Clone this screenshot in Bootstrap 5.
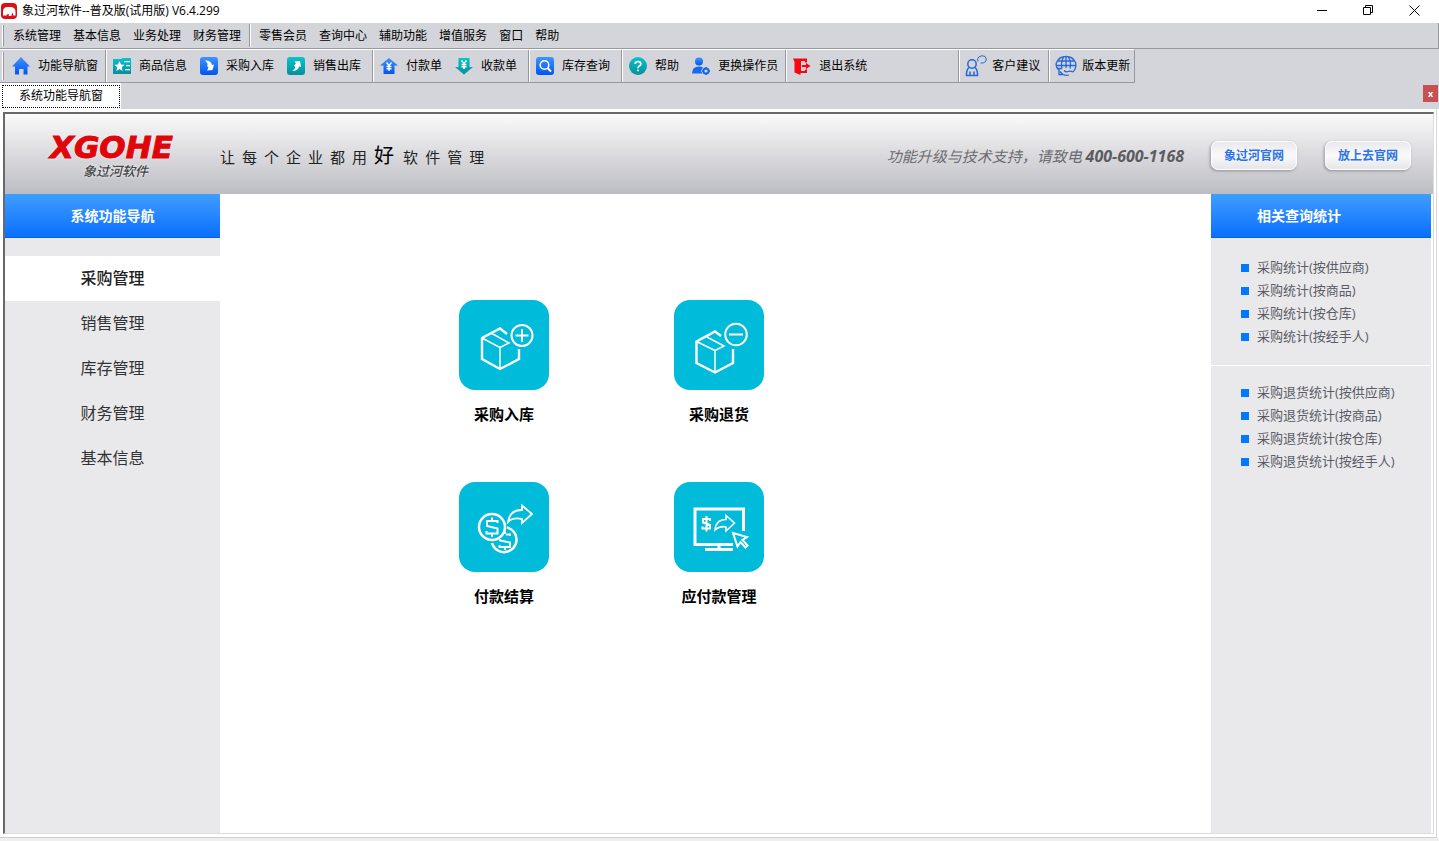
<!DOCTYPE html>
<html lang="zh-CN">
<head>
<meta charset="utf-8">
<meta name="viewport" content="width=device-width, initial-scale=1">
<title>象过河软件--普及版(试用版) V6.4.299</title>
<link href="https://cdn.jsdelivr.net/npm/bootstrap@5.3.0/dist/css/bootstrap.min.css" rel="stylesheet">
<style>
  :root { --chrome: #d4d5da; --accent: #0078ff; --tile: #00bbd9; }
  body { font-family: "Open Sans", "Noto Sans CJK SC", sans-serif; font-size: 12px; line-height: 18px; color: #000; background: #fff; }
  button { font-family: inherit; }
  a { text-decoration: none; }
  svg { display: block; flex: none; }

  .title-bar { height: 23px; }
  .title-bar .app-name { padding: 0 4px 2px; }
  .win-btn { width: 46px; height: 23px; padding: 0 0 3px; border: 0; border-radius: 0; display: flex; align-items: center; justify-content: center; }
  .win-btns { padding-right: 2px; }

  .menu-strip { height: 26px; background: var(--chrome); border-bottom: 1px solid #97989c; border-right: 1px solid #97989c; padding: 0 2px; }
  .grip { width: 2px; border-left: 1px solid #fff; border-right: 1px solid #97989c; margin: 2px 3px 2px 0; }
  .menu-strip .nav-link { padding: 4px 6px 3px; color: #000; font-size: 12px; line-height: 18px; }
  .bar-split { width: 2px; border-left: 1px solid #97989c; border-right: 1px solid #fff; }
  .menu-strip .bar-split { margin: 1px 0 1px 2px; }

  .tool-area { background: var(--chrome); }
  .tool-strip { height: 34px; width: max-content; border-top: 1px solid #fff; border-bottom: 1px solid #97989c; border-right: 1px solid #97989c; padding-left: 2px; }
  .tool-strip .grip { margin-right: 2px; }
  .tool-group { display: flex; padding: 0 4px 0 0; }
  .tool-group.wide-gap { padding-right: 84px; }
  .tool-btn { display: flex; align-items: center; gap: 8px; border: 0; border-radius: 0; background: none; padding: 0 7px 0 6px; font-size: 12px; line-height: 18px; color: #000; }
  .tool-btn.tool-lg { gap: 5px; padding: 0 4px 0 5px; }

  .tab-row { height: 26px; background: var(--chrome); }
  .doc-tab { background: #fff; padding: 2px 1px 1px 2px; border: 0; }
  .doc-tab > span { display: block; border: 1px dotted #000; padding: 1px 16px 2px; line-height: 18px; }
  .tab-close { width: 15px; height: 17px; margin: 2px 1px 0 0; padding: 0; border: 0; background: #c75050; color: #fff; font-size: 9px; line-height: 14px; font-weight: 700; }

  .frame-wrap { padding: 3px 2px 3px 3px; border-right: 1px solid #d9d9d9; border-bottom: 1px solid #d0d0d0; margin-right: 2px; }
  .frame { border-style: solid; border-width: 2px 1px 1px 2px; border-color: #696969 #dcdcdc #dcdcdc #696969; }
  .banner { height: 80px; background: linear-gradient(#fafafa, #d8d8dc 55%, #bcbdc3); padding: 2px 22px 0 45px; }
  .brand-box { width: 170px; }
  .brand-name { font: italic 700 31px/31px "DejaVu Sans", sans-serif; color: #e0050a; -webkit-text-stroke: 1px #e0050a; text-shadow: 0 0 3px #fff; }
  .brand-sub { font-size: 13px; font-style: italic; font-weight: 500; color: #444; padding-left: 33px; line-height: 16px; text-shadow: 0 0 3px #fff; }
  .slogan { gap: 7px; font-size: 15px; line-height: 24px; color: #222; padding-top: 2px; }
  .slogan .key { font-size: 20px; padding-right: 2px; color: #000; }
  .hotline { font-size: 15px; line-height: 24px; font-style: italic; color: #6c6c70; padding: 2px 27px 0 0; }
  .hotline strong { font-size: 16px; color: #5c5c60; }
  .site-btn { width: 86px; height: 29px; padding: 0; border: 1px solid #fff; border-radius: 7px; background: linear-gradient(#e9e9ee, #fafafa 50%, #e6e6ea); box-shadow: -1px 1px 3px rgba(0,0,0,.3); color: #2c74ea; font-size: 12px; font-weight: 700; line-height: 28px; text-align: center; }

  .side-panel { background: #e9e9eb; flex: none; }
  .side-left { width: 215px; }
  .side-right { width: 220px; margin-right: 2px; }
  .panel-head { height: 44px; margin: 0; background: linear-gradient(#419dff, #0a6fff); border-bottom: 1px solid #0a62dd; color: #fff; font-size: 14px; font-weight: 700; line-height: 43px; }
  .side-right .panel-head { padding-left: 46px; }
  .side-left .nav { padding-top: 18px; }
  .side-left .nav-link { height: 45px; padding: 0; border-radius: 0; text-align: center; font-size: 16px; line-height: 45px; color: #333; }
  .side-left .nav-link.active { background: #fff; color: #222; font-weight: 500; }
  .query-list { padding: 18px 0 17px 30px; margin: 0; }
  .query-list + .query-list { border-top: 1px solid #fff; padding-top: 15px; }
  .query-list a { display: flex; align-items: center; gap: 8px; color: #5a5b66; font-size: 13px; line-height: 23px; }
  .query-list a::before { content: ""; width: 8px; height: 8px; background: var(--accent); }

  .tile-grid { display: grid; grid-template-columns: repeat(3, 215px); justify-content: center; align-content: start; row-gap: 56px; padding: 106px 0 0 7px; }
  .tile { color: #000; font-size: 15px; font-weight: 700; line-height: 23px; display: flex; flex-direction: column; align-items: center; gap: 13px; }
  .tile svg { background: var(--tile); border-radius: 16px; }
  .foot-strip { height: 3px; background: #efefef; }
</style>
</head>
<body class="d-flex flex-column min-vh-100">

<header class="title-bar d-flex align-items-center">
  <svg width="18" height="20" viewBox="0 0 18 20"><rect x="1" y="1" width="16" height="16" rx="4" fill="#dd1015"/><path d="M3 13.500V10Q3 5 7.500 5H11Q15.500 5.500 15.500 9.500V13.500H13.200L12.800 10.500 11.500 12.500V14H8.800V12Q7 11.500 6.500 13.500Z" fill="#fff"/></svg>
  <span class="app-name">象过河软件--普及版(试用版) V6.4.299</span>
  <div class="win-btns d-flex ms-auto">
    <button class="btn win-btn" aria-label="最小化"><svg width="11" height="11" stroke="#000"><path d="M0 5.500H10"/></svg></button>
    <button class="btn win-btn" aria-label="还原"><svg width="11" height="11" fill="none" stroke="#000"><path d="M.5 2.500h7v7h-7zM2.500 2.500v-2h7v7h-2"/></svg></button>
    <button class="btn win-btn" aria-label="关闭"><svg width="11" height="11" stroke="#000"><path d="M.5 .5l10 10M10.500 .5l-10 10"/></svg></button>
  </div>
</header>

<nav class="menu-strip d-flex">
  <span class="grip"></span>
  <div class="nav flex-nowrap">
    <a class="nav-link" href="#">系统管理</a><a class="nav-link" href="#">基本信息</a><a class="nav-link" href="#">业务处理</a><a class="nav-link" href="#">财务管理</a>
  </div>
  <span class="bar-split"></span>
  <div class="nav flex-nowrap">
    <a class="nav-link ms-1 ps-1" href="#">零售会员</a><a class="nav-link" href="#">查询中心</a><a class="nav-link" href="#">辅助功能</a><a class="nav-link" href="#">增值服务</a><a class="nav-link" href="#">窗口</a><a class="nav-link" href="#">帮助</a>
  </div>
</nav>

<div class="tool-area">
  <svg width="0" height="0" class="position-absolute">
    <defs>
      <linearGradient id="blue" x2="0" y2="1"><stop stop-color="#3d95ff"/><stop offset="1" stop-color="#0553f0"/></linearGradient>
      <linearGradient id="teal" x2="0" y2="1"><stop stop-color="#08c4cb"/><stop offset="1" stop-color="#078e9c"/></linearGradient>
    </defs>
  </svg>
  <div class="tool-strip d-flex" role="toolbar">
    <span class="grip"></span>
    <div class="tool-group pe-0">
      <button class="tool-btn"><svg width="18" height="18"><path d="M9 0L18 9.500H15.500V17.500H11.500V12H7V17.500H3V9.500H0Z" fill="url(#blue)"/></svg>功能导航窗</button>
    </div>
    <span class="bar-split"></span>
    <div class="tool-group">
      <button class="tool-btn"><svg width="18" height="18"><path d="M0 2H8L10 1H18V17H0Z" fill="url(#teal)"/><path d="M6.500 4l1.500 3.500 3.500.3-2.700 2.400.8 3.800-3.100-2-3.100 2 .8-3.800L1.500 7.800 5 7.500zM11 4h6v1.200h-6zM13 8h4v1.300h-4zM12 12h5v1.300h-5z" fill="#fff"/></svg>商品信息</button>
      <button class="tool-btn"><svg width="18" height="18"><rect width="18" height="18" rx="3" fill="url(#blue)"/><path d="M5 3.500Q11 3 12 8L14 7.500 12.500 13 7 13.500 8.500 10.500 7 9Q9 7 5 3.500Z" fill="#fff"/></svg>采购入库</button>
      <button class="tool-btn"><svg width="18" height="18"><rect width="18" height="18" rx="3" fill="url(#teal)"/><path d="M5 14Q11 14 12 9.500L14 10 13 4 7.500 4.500 9 6.500 7 8.500Q10 11 5 14Z" fill="#fff"/></svg>销售出库</button>
    </div>
    <span class="bar-split"></span>
    <div class="tool-group">
      <button class="tool-btn"><svg width="18" height="18"><path d="M9 1L18 8.500H14.500V17H3.500V8.500H0Z" fill="url(#blue)"/><path d="M6.500 5.500L9 8.500 11.500 5.500M9 8.500V14M6.500 9.500h5M6.500 11.800h5" fill="none" stroke="#fff" stroke-width="1.400"/></svg>付款单</button>
      <button class="tool-btn"><svg width="18" height="18"><path d="M3.500 1H14.500V10H18L9 17.500 0 10H3.500Z" fill="url(#teal)"/><path d="M6.500 3.500L9 6.500 11.500 3.500M9 6.500V12M6.500 7.500h5M6.500 9.800h5" fill="none" stroke="#fff" stroke-width="1.400"/></svg>收款单</button>
    </div>
    <span class="bar-split"></span>
    <div class="tool-group">
      <button class="tool-btn"><svg width="18" height="18"><rect width="18" height="18" rx="3" fill="url(#blue)"/><circle cx="8.500" cy="8" r="4.300" fill="none" stroke="#fff" stroke-width="1.600"/><path d="M11.500 11l3.500 3.500" stroke="#fff" stroke-width="2"/></svg>库存查询</button>
    </div>
    <span class="bar-split"></span>
    <div class="tool-group pe-0">
      <button class="tool-btn"><svg width="18" height="18"><circle cx="9" cy="9" r="9" fill="url(#teal)"/><path d="M6.200 7Q6.200 4.500 9 4.500T11.800 7Q11.800 8.300 10 9.200 9 9.800 9 11.300M9 12.500v1.800" fill="none" stroke="#fff" stroke-width="1.700"/></svg>帮助</button>
      <button class="tool-btn"><svg width="18" height="18"><circle cx="7" cy="4.500" r="4" fill="url(#blue)"/><path d="M0 16.500Q0 9.500 7 9.500 9.500 9.500 11 10.500L9 14 10.500 16.500Z" fill="#1769f2"/><circle cx="14" cy="14" r="2.600" fill="none" stroke="#1664ed" stroke-width="2"/><path d="M14 10V11.500M14 16.500V18M10 14h1.500M16.500 14H18" stroke="#1664ed" stroke-width="1.600"/></svg>更换操作员</button>
    </div>
    <span class="bar-split"></span>
    <div class="tool-group wide-gap">
      <button class="tool-btn"><svg width="18" height="18"><path d="M0 1.500H14V5.500H12V4H8V14H12V12.500H14V16H7.500V18L1.500 15.500V5Z" fill="#fa0510"/><path d="M9 8H13V6L17.500 9 13 12V10H9Z" fill="#fa0510"/></svg>退出系统</button>
    </div>
    <span class="bar-split"></span>
    <div class="tool-group">
      <button class="tool-btn tool-lg"><svg width="22" height="22" fill="none" stroke="#2467d8" stroke-width="1.500"><circle cx="7" cy="9" r="4.200"/><path d="M4 12.500Q1.200 15 1.500 20.500H12.500Q12.800 15 10 12.500M5 16.500v4M9 16.500v4"/><path d="M13 6.500Q11.800 3.500 14 1.800 17-.2 20 1.500 22.500 4 20.500 6.500 19 8.500 15.500 8" stroke-width="1"/></svg>客户建议</button>
    </div>
    <span class="bar-split"></span>
    <div class="tool-group pe-0">
      <button class="tool-btn tool-lg"><svg width="22" height="22" fill="none" stroke="#2467d8" stroke-width="1.300"><path d="M4 15Q0 12 1.500 7.500 4 1.500 11 1.500T20.500 7.500Q22 13 18 17"/><path d="M8.500 2Q5.500 8 7 13.500M13.500 2Q16.500 8 15 13.500M11 1.500V13M3 6h16M1 10.500h20M2 13.500h5"/><path d="M4 14.500v5h4l-3-3M8 19.500Q11 21 14 20M9 15.500Q11 17.500 13 16.500T18 17"/></svg>版本更新</button>
    </div>
  </div>

  <div class="tab-row d-flex justify-content-between align-items-start">
    <button class="doc-tab"><span>系统功能导航窗</span></button>
    <button class="tab-close" aria-label="关闭页签">x</button>
  </div>
</div>

<div class="frame-wrap flex-grow-1 d-flex">
  <div class="frame flex-grow-1 d-flex flex-column">
    <div class="banner d-flex align-items-center">
      <div class="brand-box">
        <div class="brand-name">XGOHE</div>
        <div class="brand-sub">象过河软件</div>
      </div>
      <div class="slogan d-flex align-items-baseline"><span>让</span><span>每</span><span>个</span><span>企</span><span>业</span><span>都</span><span>用</span><span class="key">好</span><span>软</span><span>件</span><span>管</span><span>理</span></div>
      <div class="hotline ms-auto">功能升级与技术支持，请致电 <strong>400-600-1168</strong></div>
      <a class="site-btn me-4" href="#">象过河官网</a>
      <a class="site-btn ms-1" href="#">放上去官网</a>
    </div>

    <div class="d-flex flex-grow-1">
      <aside class="side-panel side-left">
        <h2 class="panel-head text-center">系统功能导航</h2>
        <nav class="nav flex-column">
          <a class="nav-link active" href="#">采购管理</a>
          <a class="nav-link" href="#">销售管理</a>
          <a class="nav-link" href="#">库存管理</a>
          <a class="nav-link" href="#">财务管理</a>
          <a class="nav-link" href="#">基本信息</a>
        </nav>
      </aside>

      <main class="tile-grid flex-grow-1">
        <a class="tile" href="#">
          <svg width="90" height="90" fill="none" stroke="#fff" stroke-width="2.400"><path d="M48 34L41 28.500 23 38V59L41 69 60 59V49"/><path d="M23 38L41 47.500V69M41 47.500L50 43L33 33.500" stroke-width="1.500"/><circle cx="63" cy="35.500" r="10.500" stroke-width="2"/><path d="M56.500 35.500h13M63 29v13" stroke-width="2"/></svg>
          采购入库</a>
        <a class="tile" href="#">
          <svg width="90" height="90" fill="none" stroke="#fff" stroke-width="2.400"><path d="M47 36L41 31.500 22.500 41.500V63L41 72.500 59 63V49"/><path d="M22.500 41.500L41 50.500V72.500M41 50.500L50 46L33 37" stroke-width="1.500"/><circle cx="62" cy="34.500" r="10.800" stroke-width="2"/><path d="M55 34.500h14" stroke-width="2"/></svg>
          采购退货</a>
        <span></span>
        <a class="tile" href="#">
          <svg width="90" height="90" fill="none" stroke="#fff" stroke-width="2.500"><circle cx="33" cy="45" r="13"/><path d="M48 45.500A12.500 12.500 0 1 1 33 61"/><path d="M38.500 41V39H28V44L38.500 46.500V51.500H27.500V49M33 35.500V39M33 52V55" stroke-width="2"/><path d="M51 54V52.500H47M41 57V58.500L51 60.500V65H40.500V63M46 49.500V52M46 65V68" stroke-width="1.900"/><path d="M49 40Q51 27.500 63 28V23.500L73 32 63 41V37Q54 35 49 40Z" stroke-width="1.800"/></svg>
          付款结算</a>
        <a class="tile" href="#">
          <svg width="90" height="90" fill="none" stroke="#fff" stroke-width="3"><path d="M59 62.500H21V27H69.500V49"/><path d="M31 67.500H59M45 62.500V67.500"/><path d="M36 39V37H29V40.500L36 43V46.500H28.500V44.500M32.500 34V49.500" stroke-width="2"/><path d="M41 48Q42 37.500 52 37.500V33.500L60.500 41 52 49V45Q46 43.500 41 48Z" stroke-width="1.600"/><path d="M59 51L73 55 68.500 58 73.500 63.500 71.500 65.500 66.500 60 63.500 64.500Z" stroke-width="2"/></svg>
          应付款管理</a>
      </main>

      <aside class="side-panel side-right">
        <h2 class="panel-head">相关查询统计</h2>
        <ul class="list-unstyled query-list">
          <li><a href="#">采购统计(按供应商)</a></li>
          <li><a href="#">采购统计(按商品)</a></li>
          <li><a href="#">采购统计(按仓库)</a></li>
          <li><a href="#">采购统计(按经手人)</a></li>
        </ul>
        <ul class="list-unstyled query-list">
          <li><a href="#">采购退货统计(按供应商)</a></li>
          <li><a href="#">采购退货统计(按商品)</a></li>
          <li><a href="#">采购退货统计(按仓库)</a></li>
          <li><a href="#">采购退货统计(按经手人)</a></li>
        </ul>
      </aside>
    </div>
  </div>
</div>
<footer class="foot-strip"></footer>

<script src="https://cdn.jsdelivr.net/npm/bootstrap@5.3.0/dist/js/bootstrap.bundle.min.js"></script>
</body>
</html>
